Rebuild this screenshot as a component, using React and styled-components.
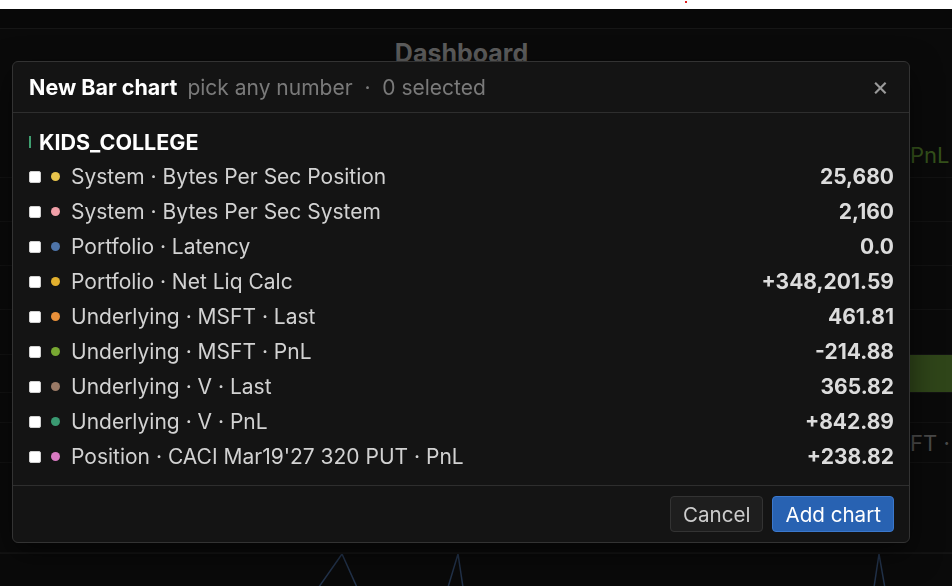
import React from "react";
import styled, { createGlobalStyle } from "styled-components";

const GlobalStyle = createGlobalStyle`
  html, body {
    margin: 0;
    height: 100%;
    background: #0a0a0a;
    font-family: Inter, "Noto Sans", "Liberation Sans", sans-serif;
    overflow: hidden;
  }
  * { box-sizing: border-box; }
`;

const Page = styled.div`
  display: flex;
  flex-direction: column;
  height: 100vh;
  background: #0a0a0a;
`;

const TopStrip = styled.div`
  height: 9px;
  background: #ffffff;
  position: relative;
  &::after {
    content: "";
    position: absolute;
    left: 685px;
    top: 1px;
    width: 2px;
    height: 2px;
    background: #e02020;
  }
`;

const AppBar = styled.div`
  height: 20px;
  border-bottom: 1px solid #161616;
  background: #080808;
`;

const TitleRow = styled.div`
  height: 36px;
  display: flex;
  align-items: flex-end;
  justify-content: center;
  padding-right: 29px;
`;

const PageTitle = styled.h1`
  margin: 0 0 -1px 0;
  font-size: 25px;
  font-weight: 700;
  color: #5c5c5c;
  line-height: 1;
`;

const Table = styled.div`
  display: flex;
  flex-direction: column;
  padding-top: 67px;
`;

const TableRow = styled.div`
  height: ${(p) => p.$h}px;
  border-bottom: 1px solid #121212;
  display: flex;
  align-items: center;
  justify-content: flex-end;
  color: ${(p) => p.$color || "#444"};
  font-size: 22px;
  background: ${(p) => p.$fill || "transparent"};
`;

const RightCell = styled.span`
  width: 42px;
  overflow: hidden;
  white-space: nowrap;
`;

const ChartArea = styled.div`
  flex: 1;
  border-top: 1px solid #141414;
  overflow: hidden;
`;

const Overlay = styled.div`
  position: fixed;
  inset: 9px 0 0 0;
  display: flex;
  align-items: flex-start;
  padding: 52px 0 0 12px;
`;

const Modal = styled.div`
  width: 898px;
  background: #141414;
  border: 1px solid #333;
  border-radius: 6px;
  display: flex;
  flex-direction: column;
  box-shadow: 0 10px 30px rgba(0, 0, 0, 0.5);
`;

const Header = styled.div`
  height: 51px;
  display: flex;
  align-items: center;
  padding: 0 16px;
  border-bottom: 1px solid #2e2e2e;
  gap: 10px;
`;

const Title = styled.span`
  font-size: 21.5px;
  font-weight: 700;
  color: #ffffff;
`;

const Subtitle = styled.span`
  font-size: 21px;
  color: #7a7a7a;
  flex: 1;
`;

const Close = styled.button`
  background: none;
  border: none;
  color: #9a9a9a;
  font-size: 26px;
  line-height: 1;
  padding: 0 4px 2px 0;
  cursor: pointer;
  font-family: inherit;
`;

const Body = styled.div`
  padding: 17px 15px 11px 16px;
  display: flex;
  flex-direction: column;
`;

const Group = styled.div`
  height: 24px;
  margin-bottom: 5px;
  display: flex;
  align-items: center;
  gap: 8px;
  font-size: 21.5px;
  font-weight: 700;
  color: #ffffff;
  &::before {
    content: "";
    width: 2px;
    height: 12px;
    background: #3f9f70;
  }
`;

const Row = styled.label`
  height: 35px;
  display: flex;
  align-items: center;
  cursor: pointer;
`;

const Check = styled.span`
  width: 12px;
  height: 12px;
  border-radius: 2px;
  background: #ffffff;
  border: 1px solid #cfcfcf;
  flex: none;
`;

const Dot = styled.span`
  width: 9px;
  height: 9px;
  border-radius: 50%;
  background: ${(p) => p.$color};
  margin: 0 11px 0 10px;
  flex: none;
`;

const Label = styled.span`
  flex: 1;
  font-size: 21px;
  color: #d2d2d2;
`;

const Value = styled.span`
  font-size: 21px;
  font-weight: 700;
  color: #dcdcdc;
`;

const Footer = styled.div`
  height: 57px;
  border-top: 1px solid #2e2e2e;
  display: flex;
  align-items: center;
  justify-content: flex-end;
  gap: 9px;
  padding: 0 15px 0 16px;
`;

const Button = styled.button`
  height: 36px;
  padding: 0 12px;
  border-radius: 4px;
  font-family: inherit;
  font-size: 20.6px;
  cursor: pointer;
  border: 1px solid ${(p) => (p.$primary ? "#3b78cc" : "#333")};
  background: ${(p) => (p.$primary ? "#2862b2" : "#1e1e1e")};
  color: ${(p) => (p.$primary ? "#ffffff" : "#cccccc")};
`;

const series = [
  { label: "System · Bytes Per Sec Position", value: "25,680", color: "#e8c44c" },
  { label: "System · Bytes Per Sec System", value: "2,160", color: "#f1a0a8" },
  { label: "Portfolio · Latency", value: "0.0", color: "#4e74a8" },
  { label: "Portfolio · Net Liq Calc", value: "+348,201.59", color: "#e2b02e" },
  { label: "Underlying · MSFT · Last", value: "461.81", color: "#e8903a" },
  { label: "Underlying · MSFT · PnL", value: "-214.88", color: "#78a832" },
  { label: "Underlying · V · Last", value: "365.82", color: "#9a7a66" },
  { label: "Underlying · V · PnL", value: "+842.89", color: "#3a9a72" },
  { label: "Position · CACI Mar19'27 320 PUT · PnL", value: "+238.82", color: "#d87ac2" },
];

const bgRows = [
  { h: 46, text: "PnL", color: "#34511b" },
  { h: 44, text: "" },
  { h: 44, text: "" },
  { h: 44, text: "" },
  { h: 45, text: "" },
  { h: 38, text: "", fill: "linear-gradient(90deg, #0a0a0a 0, #0a0a0a 910px, #2f4519 910px)" },
  { h: 30, text: "" },
  { h: 40, text: "FT ·", color: "#4a4a4a" },
  { h: 90, text: "" },
];

export default function App() {
  return (
    <>
      <GlobalStyle />
      <Page>
        <TopStrip />
        <AppBar />
        <TitleRow>
          <PageTitle>Dashboard</PageTitle>
        </TitleRow>
        <Table>
          {bgRows.map((r, i) => (
            <TableRow key={i} $h={r.h} $color={r.color} $fill={r.fill}>
              <RightCell>{r.text}</RightCell>
            </TableRow>
          ))}
        </Table>
        <ChartArea>
          <svg width="952" height="40" viewBox="0 0 952 40">
            <polyline points="300,60 342,0 360,40" fill="none" stroke="#22324a" strokeWidth="1.5" />
            <polyline points="440,60 458,0 464,40" fill="none" stroke="#22324a" strokeWidth="1.5" />
            <polyline points="870,60 879,0 886,40" fill="none" stroke="#22324a" strokeWidth="1.5" />
          </svg>
        </ChartArea>
      </Page>

      <Overlay>
        <Modal>
          <Header>
            <Title>New Bar chart</Title>
            <Subtitle>pick any number &nbsp;·&nbsp; 0 selected</Subtitle>
            <Close aria-label="Close">×</Close>
          </Header>
          <Body>
            <Group>KIDS_COLLEGE</Group>
            {series.map((s) => (
              <Row key={s.label}>
                <Check />
                <Dot $color={s.color} />
                <Label>{s.label}</Label>
                <Value>{s.value}</Value>
              </Row>
            ))}
          </Body>
          <Footer>
            <Button>Cancel</Button>
            <Button $primary>Add chart</Button>
          </Footer>
        </Modal>
      </Overlay>
    </>
  );
}
